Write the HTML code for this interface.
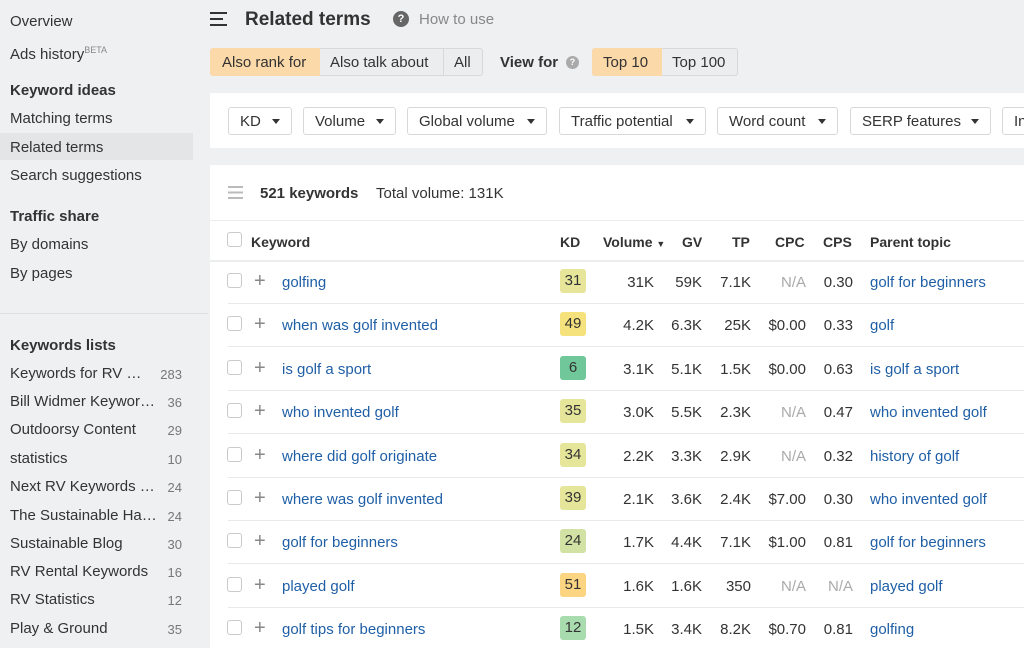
<!DOCTYPE html>
<html><head><style>
*{margin:0;padding:0;box-sizing:border-box}
body{width:1024px;height:648px;overflow:hidden;background:#eff0f2;font-family:"Liberation Sans",sans-serif;color:#333;position:relative;font-size:15px}
.a{position:absolute;white-space:nowrap}
.side{left:0;top:0;width:210px;height:648px;background:#eff0f2}
.si{position:absolute;left:10px;font-size:15px;color:#333;line-height:18px}
.sh{font-weight:bold}
.cnt{position:absolute;right:28px;font-size:13px;color:#777}
.btn{position:absolute;height:28px;border:1px solid #d6d8da;border-radius:3px;background:#fff;font-size:15px;color:#333;line-height:27px;padding-left:11px}
.btn:after{content:"";position:absolute;right:11px;top:11px;border-left:4px solid transparent;border-right:4px solid transparent;border-top:5px solid #333}
.kw{color:#1f5fa6}
.kd{position:absolute;left:560px;width:26px;height:24px;border-radius:3px;text-align:center;line-height:24px;font-size:15px;color:#333}
.r{position:absolute;text-align:right;font-size:15px}
.cb{position:absolute;left:227px;width:15px;height:15px;border:1px solid #c8cacc;border-radius:3px;background:#fff}
.pl{position:absolute;left:254px;font-size:20px;color:#888;line-height:20px}
.hl{position:absolute;left:228px;right:0;height:1px;background:#e8e9ea}
</style></head><body>
<div class="a side">
<div class="si" style="top:13px">Overview</div>
<div class="si" style="top:41px">Ads history<sup style="font-size:9px;color:#888;vertical-align:6px">BETA</sup></div>
<div class="si sh" style="top:82px">Keyword ideas</div>
<div class="si" style="top:110px">Matching terms</div>
<div style="position:absolute;left:0;top:133px;width:193px;height:27px;background:#e3e5e7"></div>
<div class="si" style="top:139px">Related terms</div>
<div class="si" style="top:167px">Search suggestions</div>
<div class="si sh" style="top:208px">Traffic share</div>
<div class="si" style="top:236px">By domains</div>
<div class="si" style="top:265px">By pages</div>
<div style="position:absolute;left:0;top:313px;width:208px;height:1px;background:#dcdee0"></div>
<div class="si sh" style="top:337px">Keywords lists</div>
<div class="si" style="top:365px">Keywords for RV …</div><div class="cnt" style="top:367px">283</div>
<div class="si" style="top:393px">Bill Widmer Keywor…</div><div class="cnt" style="top:395px">36</div>
<div class="si" style="top:421px">Outdoorsy Content</div><div class="cnt" style="top:423px">29</div>
<div class="si" style="top:450px">statistics</div><div class="cnt" style="top:452px">10</div>
<div class="si" style="top:478px">Next RV Keywords …</div><div class="cnt" style="top:480px">24</div>
<div class="si" style="top:507px">The Sustainable Ha…</div><div class="cnt" style="top:509px">24</div>
<div class="si" style="top:535px">Sustainable Blog</div><div class="cnt" style="top:537px">30</div>
<div class="si" style="top:563px">RV Rental Keywords</div><div class="cnt" style="top:565px">16</div>
<div class="si" style="top:591px">RV Statistics</div><div class="cnt" style="top:593px">12</div>
<div class="si" style="top:620px">Play &amp; Ground</div><div class="cnt" style="top:622px">35</div>
</div>

<svg class="a" style="left:210px;top:12px" width="18" height="14"><g stroke="#333" stroke-width="2"><line x1="0" y1="1" x2="17" y2="1"/><line x1="0" y1="7" x2="13" y2="7"/><line x1="0" y1="13" x2="17" y2="13"/></g></svg>
<div class="a" style="left:245px;top:9px;font-size:19px;font-weight:bold;color:#333">Related terms</div>
<div class="a" style="left:393px;top:11px;width:16px;height:16px;border-radius:50%;background:#666;color:#fff;font-size:11px;font-weight:bold;text-align:center;line-height:16px">?</div>
<div class="a" style="left:419px;top:11px;font-size:15px;color:#888">How to use</div>

<div class="a" style="left:210px;top:48px;width:273px;height:28px;border:1px solid #d6d8da;border-radius:3px;background:#ebedef"></div>
<div class="a" style="left:210px;top:48px;width:110px;height:28px;background:#fcd9a8;border-radius:3px 0 0 3px;line-height:30px;padding-left:12px">Also rank for</div>
<div class="a" style="left:330px;top:48px;line-height:30px">Also talk about</div>
<div class="a" style="left:443px;top:49px;width:1px;height:26px;background:#d6d8da"></div>
<div class="a" style="left:454px;top:48px;line-height:30px">All</div>
<div class="a" style="left:500px;top:48px;line-height:30px;font-weight:bold">View for</div>
<div class="a" style="left:566px;top:56px;width:13px;height:13px;border-radius:50%;background:#aaa;color:#fff;font-size:9px;font-weight:bold;text-align:center;line-height:13px">?</div>
<div class="a" style="left:592px;top:48px;width:146px;height:28px;border:1px solid #d6d8da;border-radius:3px;background:#ebedef"></div>
<div class="a" style="left:592px;top:48px;width:70px;height:28px;background:#fcd9a8;border-radius:3px 0 0 3px;line-height:30px;padding-left:11px">Top 10</div>
<div class="a" style="left:672px;top:48px;line-height:30px">Top 100</div>

<div class="a" style="left:210px;top:93px;width:814px;height:55px;background:#fff"></div>
<div class="btn" style="left:228px;top:107px;width:64px">KD</div>
<div class="btn" style="left:303px;top:107px;width:93px">Volume</div>
<div class="btn" style="left:407px;top:107px;width:140px">Global volume</div>
<div class="btn" style="left:559px;top:107px;width:147px">Traffic potential</div>
<div class="btn" style="left:717px;top:107px;width:121px">Word count</div>
<div class="btn" style="left:850px;top:107px;width:141px">SERP features</div>
<div class="btn" style="left:1002px;top:107px;width:60px">In</div>

<div class="a" style="left:210px;top:165px;width:814px;height:483px;background:#fff"></div>
<svg class="a" style="left:228px;top:186px" width="15" height="13"><g stroke="#bbb" stroke-width="2"><line x1="0" y1="1" x2="15" y2="1"/><line x1="0" y1="6.5" x2="15" y2="6.5"/><line x1="0" y1="12" x2="15" y2="12"/></g></svg>
<div class="a" style="left:260px;top:185px;font-weight:bold">521 keywords</div>
<div class="a" style="left:376px;top:185px">Total volume: 131K</div>
<div class="a" style="left:210px;top:220px;width:814px;height:1px;background:#eceded"></div>
<div class="a" style="left:210px;top:260px;width:814px;height:2px;background:#eceded"></div>
<div class="cb" style="top:232px"></div>
<div class="a" style="left:251px;top:234px;font-size:14px;font-weight:bold">Keyword</div>
<div class="a" style="left:560px;top:234px;font-size:14px;font-weight:bold">KD</div>
<div class="a" style="left:603px;top:234px;font-size:14px;font-weight:bold">Volume <span style="font-size:9px">▼</span></div>
<div class="a" style="left:682px;top:234px;font-size:14px;font-weight:bold">GV</div>
<div class="a" style="left:732px;top:234px;font-size:14px;font-weight:bold">TP</div>
<div class="a" style="left:775px;top:234px;font-size:14px;font-weight:bold">CPC</div>
<div class="a" style="left:823px;top:234px;font-size:14px;font-weight:bold">CPS</div>
<div class="a" style="left:870px;top:234px;font-size:14px;font-weight:bold">Parent topic</div>

<div id="rows"></div>
<script>
var d=[["golfing","31","#e6e59a","31K","59K","7.1K","N/A","0.30","golf for beginners"],
["when was golf invented","49","#f6e27c","4.2K","6.3K","25K","$0.00","0.33","golf"],
["is golf a sport","6","#6fc79a","3.1K","5.1K","1.5K","$0.00","0.63","is golf a sport"],
["who invented golf","35","#e6e69a","3.0K","5.5K","2.3K","N/A","0.47","who invented golf"],
["where did golf originate","34","#e6e69a","2.2K","3.3K","2.9K","N/A","0.32","history of golf"],
["where was golf invented","39","#e6e69a","2.1K","3.6K","2.4K","$7.00","0.30","who invented golf"],
["golf for beginners","24","#d2e2a4","1.7K","4.4K","7.1K","$1.00","0.81","golf for beginners"],
["played golf","51","#fbd582","1.6K","1.6K","350","N/A","N/A","played golf"],
["golf tips for beginners","12","#a8dcae","1.5K","3.4K","8.2K","$0.70","0.81","golfing"]];
var h="";
d.forEach(function(r,i){var y=Math.round(281+43.4*i);var t=y-7;
h+='<div class="cb" style="top:'+(y-8)+'px"></div><div class="pl" style="top:'+(y-10)+'px">+</div>';
h+='<div class="a kw" style="left:282px;top:'+t+'px">'+r[0]+'</div>';
h+='<div class="kd" style="top:'+(y-12)+'px;background:'+r[2]+'">'+r[1]+'</div>';
var c=function(v,x){return '<div class="r" style="left:'+(x-60)+'px;width:60px;top:'+t+'px;color:'+(v=="N/A"?"#aaa":"#333")+'">'+v+'</div>'};
h+=c(r[3],654)+c(r[4],702)+c(r[5],751)+c(r[6],806)+c(r[7],853);
h+='<div class="a kw" style="left:870px;top:'+t+'px">'+r[8]+'</div>';
if(i<8)h+='<div class="hl" style="top:'+(y+22)+'px"></div>';});
document.getElementById("rows").innerHTML=h;
</script>
</body></html>
